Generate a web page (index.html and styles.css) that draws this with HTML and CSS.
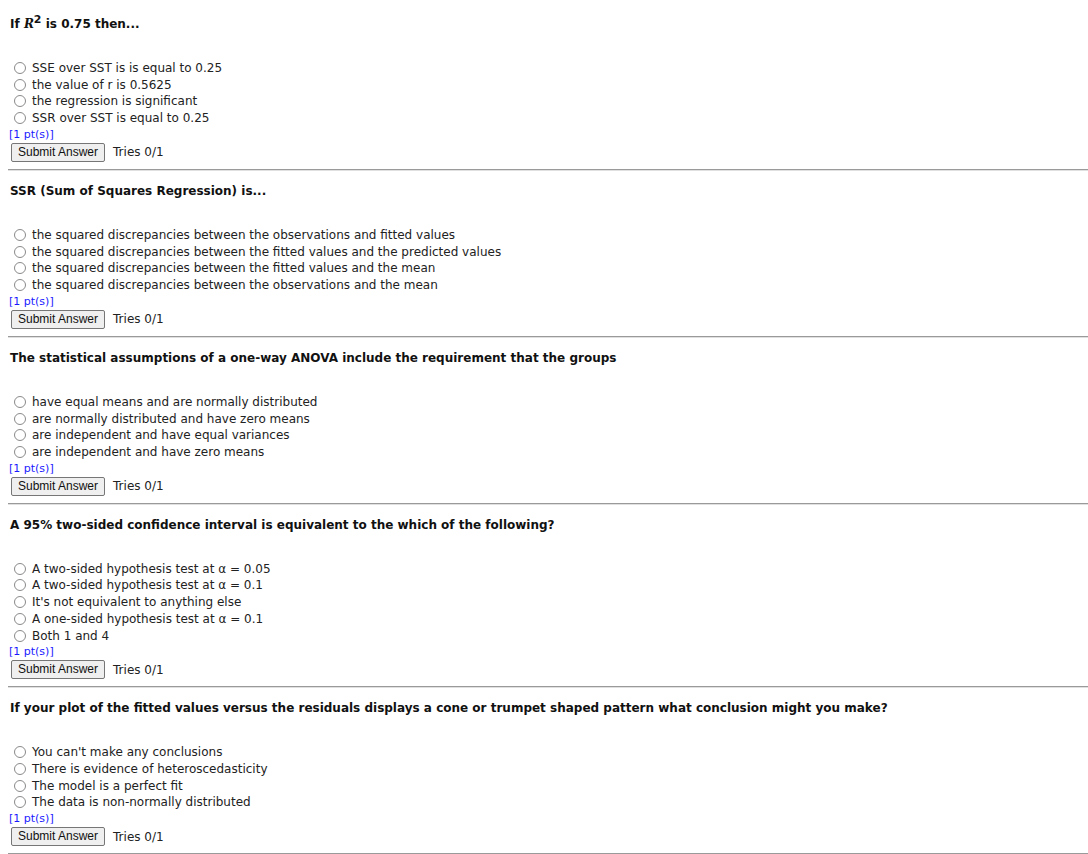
FILE: index.html
```html
<!DOCTYPE html>
<html>
<head>
<meta charset="utf-8">
<link rel="stylesheet" href="styles.css">
</head>
<body>
<div class="page">

<div class="q">
  <div class="title">If <i class="var">R</i><sup>2</sup> is 0.75 then...</div>
  <ul class="opts">
    <li><span class="radio"></span>SSE over SST is is equal to 0.25</li>
    <li><span class="radio"></span>the value of r is 0.5625</li>
    <li><span class="radio"></span>the regression is significant</li>
    <li><span class="radio"></span>SSR over SST is equal to 0.25</li>
  </ul>
  <div class="pts">[1 pt(s)]</div>
  <div class="actions"><button class="btn">Submit Answer</button><span class="tries">Tries 0/1</span></div>
</div>
<hr class="rule">

<div class="q">
  <div class="title">SSR (Sum of Squares Regression) is...</div>
  <ul class="opts">
    <li><span class="radio"></span>the squared discrepancies between the observations and fitted values</li>
    <li><span class="radio"></span>the squared discrepancies between the fitted values and the predicted values</li>
    <li><span class="radio"></span>the squared discrepancies between the fitted values and the mean</li>
    <li><span class="radio"></span>the squared discrepancies between the observations and the mean</li>
  </ul>
  <div class="pts">[1 pt(s)]</div>
  <div class="actions"><button class="btn">Submit Answer</button><span class="tries">Tries 0/1</span></div>
</div>
<hr class="rule">

<div class="q">
  <div class="title">The statistical assumptions of a one-way ANOVA include the requirement that the groups</div>
  <ul class="opts">
    <li><span class="radio"></span>have equal means and are normally distributed</li>
    <li><span class="radio"></span>are normally distributed and have zero means</li>
    <li><span class="radio"></span>are independent and have equal variances</li>
    <li><span class="radio"></span>are independent and have zero means</li>
  </ul>
  <div class="pts">[1 pt(s)]</div>
  <div class="actions"><button class="btn">Submit Answer</button><span class="tries">Tries 0/1</span></div>
</div>
<hr class="rule">

<div class="q">
  <div class="title">A 95% two-sided confidence interval is equivalent to the which of the following?</div>
  <ul class="opts">
    <li><span class="radio"></span>A two-sided hypothesis test at α = 0.05</li>
    <li><span class="radio"></span>A two-sided hypothesis test at α = 0.1</li>
    <li><span class="radio"></span>It's not equivalent to anything else</li>
    <li><span class="radio"></span>A one-sided hypothesis test at α = 0.1</li>
    <li><span class="radio"></span>Both 1 and 4</li>
  </ul>
  <div class="pts">[1 pt(s)]</div>
  <div class="actions"><button class="btn">Submit Answer</button><span class="tries">Tries 0/1</span></div>
</div>
<hr class="rule">

<div class="q">
  <div class="title">If your plot of the fitted values versus the residuals displays a cone or trumpet shaped pattern what conclusion might you make?</div>
  <ul class="opts">
    <li><span class="radio"></span>You can't make any conclusions</li>
    <li><span class="radio"></span>There is evidence of heteroscedasticity</li>
    <li><span class="radio"></span>The model is a perfect fit</li>
    <li><span class="radio"></span>The data is non-normally distributed</li>
  </ul>
  <div class="pts">[1 pt(s)]</div>
  <div class="actions"><button class="btn">Submit Answer</button><span class="tries">Tries 0/1</span></div>
</div>
<hr class="rule">

</div>
</body>
</html>
```
FILE: styles.css
```css
html, body {
  margin: 0;
  padding: 0;
  background: #ffffff;
}
body {
  font-family: "DejaVu Sans", Verdana, sans-serif;
  font-size: 12px;
  color: #1a1a1a;
}
.page {
  padding: 16px 0 0 8px;
}
.q {
  display: flex;
  flex-direction: column;
  align-items: flex-start;
}
.title {
  font-weight: bold;
  font-size: 12px;
  line-height: 16px;
  padding-left: 2px;
  color: #111;
}
.title .var {
  font-family: "DejaVu Serif", serif;
  font-style: italic;
}
.title sup {
  font-size: 11px;
  line-height: 0;
  vertical-align: 5px;
}
.opts {
  list-style: none;
  margin: 27.6px 0 0 0;
  padding: 0;
}
.opts li {
  display: flex;
  align-items: center;
  height: 16.7px;
  line-height: 16px;
  color: #222;
}
.radio {
  width: 12px;
  height: 12px;
  border: 1px solid #8a8a8a;
  border-radius: 50%;
  box-sizing: border-box;
  margin: 0 6px 0 6px;
  background: #fff;
}
.pts {
  color: #1a1aff;
  font-size: 11px;
  line-height: 14px;
  margin: 1.6px 0 0 1px;
}
.actions {
  display: flex;
  align-items: center;
  margin-top: 1px;
  margin-left: 3px;
}
.btn {
  font-family: "Liberation Sans", Arial, sans-serif;
  font-size: 12px;
  height: 19px;
  padding: 0 6px;
  background: #efefef;
  border: 1px solid #767676;
  border-radius: 2px;
  color: #111;
  line-height: 15px;
}
.tries {
  margin-left: 8px;
  color: #222;
}
.rule {
  margin: 7px 0 12px 0;
  border: 0;
  border-top: 1px solid #9a9a9a;
  border-bottom: 1px solid #e0e0e0;
  height: 0;
}
```
